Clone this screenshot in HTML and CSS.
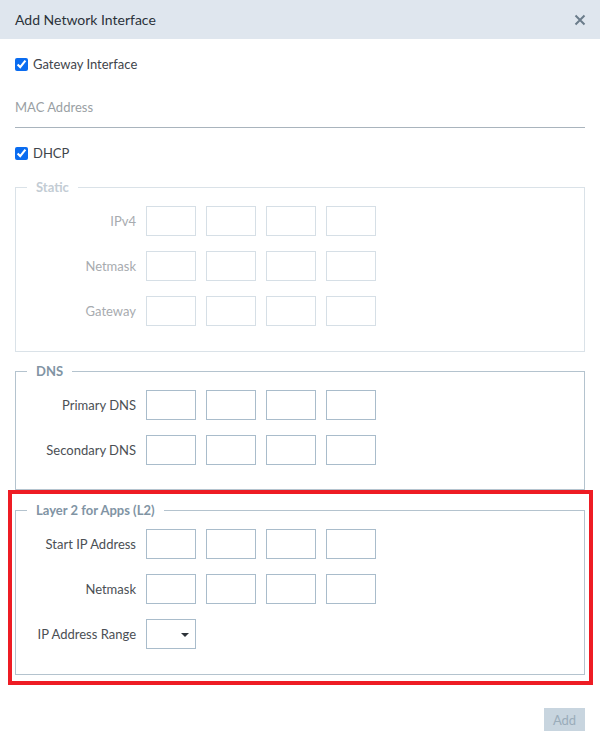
FILE: index.html
```html
<!DOCTYPE html>
<html lang="en">
<head>
<meta charset="utf-8">
<title>Add Network Interface</title>
<link rel="stylesheet" href="styles.css">
</head>
<body>
<div class="dialog">
  <header class="dialog-header">
    <h1 class="dialog-title">Add Network Interface</h1>
    <button class="close-btn" aria-label="Close">
      <svg width="12" height="12" viewBox="0 0 12 12"><path d="M1.5 1.5 L10.5 10.5 M10.5 1.5 L1.5 10.5" stroke="#6b7c8b" stroke-width="2" fill="none"/></svg>
    </button>
  </header>
  <div class="dialog-body">
    <label class="check-row first"><input type="checkbox" checked><span>Gateway Interface</span></label>
    <input class="mac-input" type="text" placeholder="MAC Address">
    <label class="check-row"><input type="checkbox" checked><span>DHCP</span></label>

    <fieldset class="group disabled">
      <legend>Static</legend>
      <div class="row"><span class="lbl">IPv4</span><span class="oct"></span><span class="oct"></span><span class="oct"></span><span class="oct"></span></div>
      <div class="row"><span class="lbl">Netmask</span><span class="oct"></span><span class="oct"></span><span class="oct"></span><span class="oct"></span></div>
      <div class="row"><span class="lbl">Gateway</span><span class="oct"></span><span class="oct"></span><span class="oct"></span><span class="oct"></span></div>
    </fieldset>

    <fieldset class="group dns">
      <legend>DNS</legend>
      <div class="row"><span class="lbl">Primary DNS</span><span class="oct"></span><span class="oct"></span><span class="oct"></span><span class="oct"></span></div>
      <div class="row"><span class="lbl">Secondary DNS</span><span class="oct"></span><span class="oct"></span><span class="oct"></span><span class="oct"></span></div>
    </fieldset>

    <div class="highlight-wrap">
      <fieldset class="group l2">
        <legend>Layer 2 for Apps (L2)</legend>
        <div class="row"><span class="lbl">Start IP Address</span><span class="oct"></span><span class="oct"></span><span class="oct"></span><span class="oct"></span></div>
        <div class="row"><span class="lbl">Netmask</span><span class="oct"></span><span class="oct"></span><span class="oct"></span><span class="oct"></span></div>
        <div class="row"><span class="lbl">IP Address Range</span><span class="oct select"><span class="caret"></span></span></div>
      </fieldset>
      <div class="highlight"></div>
    </div>

    <div class="footer"><button class="add-btn" disabled>Add</button></div>
  </div>
</div>
</body>
</html>
```
FILE: styles.css
```css
* { box-sizing: border-box; }
html, body { margin: 0; padding: 0; background: #fff; }
body {
  font-family: Lato, "Noto Sans", sans-serif;
  font-size: 13px;
  color: #4b4f54;
}
.dialog { width: 600px; }
.dialog-header {
  height: 39px;
  background: #dfe6ee;
  display: flex;
  align-items: center;
  justify-content: space-between;
  padding: 0 14px 0 15px;
}
.dialog-title {
  margin: 0;
  font-size: 14px;
  font-weight: 400;
  color: #2b323a;
}
.close-btn {
  border: 0;
  background: transparent;
  padding: 0;
  width: 12px;
  height: 12px;
  display: flex;
}
.dialog-body { padding: 0 15px; }
.check-row {
  display: flex;
  align-items: center;
  height: 20px;
  gap: 5px;
  color: #3f454b;
}
.check-row input {
  margin: 0;
  width: 13px;
  height: 13px;
  accent-color: #0a6cf0;
}
.check-row.first { margin-top: 15px; }
.mac-input {
  display: block;
  width: 100%;
  margin-top: 19px;
  height: 35px;
  border: 0;
  border-bottom: 1px solid #a9b4bd;
  padding: 0 0 6px 0;
  font-family: inherit;
  font-size: 13px;
  color: #333;
  outline: none;
}
.mac-input::placeholder { color: #9a9fa4; }
.mac-input + .check-row { margin-top: 15px; }
.group {
  margin: 15px 0 0 0;
  border: 1px solid #b4c3ce;
  padding: 10px 0 25px 0;
  display: flex;
  flex-direction: column;
  gap: 15px;
}
.group legend {
  margin-left: 11px;
  padding: 0 9px;
  font-weight: 700;
  font-size: 13px;
  line-height: 18px;
  color: #8194a4;
}
.group.dns { margin-top: 10px; padding-bottom: 24px; }
.row {
  display: flex;
  align-items: center;
  gap: 10px;
}
.lbl {
  width: 120px;
  text-align: right;
  color: #4b4f54;
}
.oct {
  width: 50px;
  height: 30px;
  border: 1px solid #a9bccb;
  position: relative;
}
.disabled { border-color: #dae2e8; }
.disabled legend { color: #c3ccd4; }
.disabled .lbl { color: #a7abaf; }
.disabled .oct { border-color: #d6dfe6; }
.highlight-wrap {
  position: relative;
  margin-top: 11px;
}
.highlight-wrap .group { margin-top: 0; }
.highlight {
  position: absolute;
  left: -7px;
  right: -8px;
  top: -11px;
  bottom: -10px;
  border: 4px solid #ee1c24;
  pointer-events: none;
}
.caret {
  position: absolute;
  right: 6px;
  top: 13px;
  width: 0;
  height: 0;
  border-left: 4px solid transparent;
  border-right: 4px solid transparent;
  border-top: 4px solid #2d3339;
}
.footer {
  display: flex;
  justify-content: flex-end;
  margin-top: 33px;
}
.add-btn {
  width: 41px;
  height: 23px;
  border: 0;
  background: #c8d5df;
  color: #9aacba;
  font-family: inherit;
  font-size: 13px;
  padding: 0;
}
```
